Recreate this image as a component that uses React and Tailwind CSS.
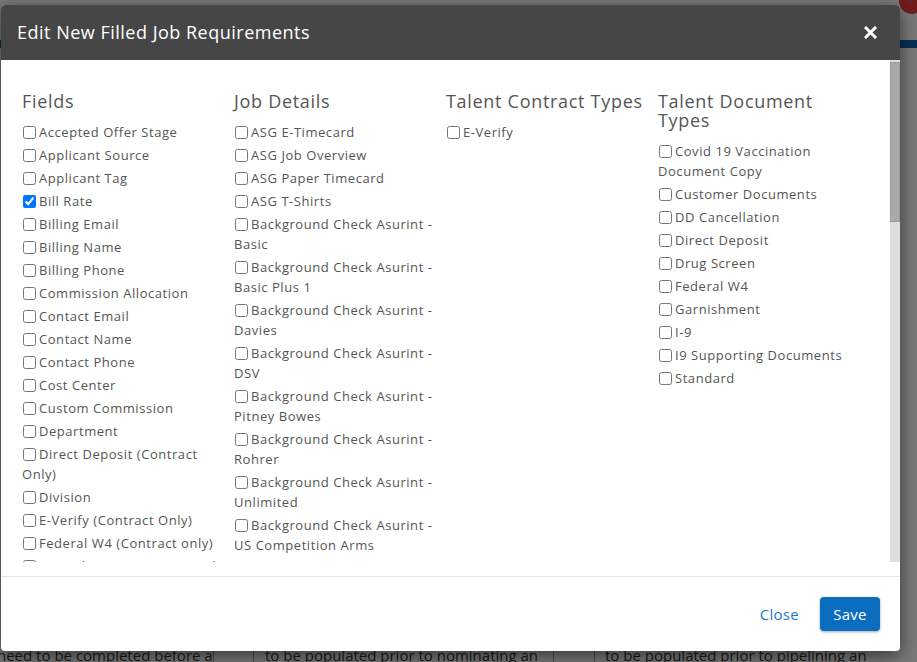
import { useState } from "react";

const fields = [
  "Accepted Offer Stage",
  "Applicant Source",
  "Applicant Tag",
  "Bill Rate",
  "Billing Email",
  "Billing Name",
  "Billing Phone",
  "Commission Allocation",
  "Contact Email",
  "Contact Name",
  "Contact Phone",
  "Cost Center",
  "Custom Commission",
  "Department",
  "Direct Deposit (Contract Only)",
  "Division",
  "E-Verify (Contract Only)",
  "Federal W4 (Contract only)",
  "Garnishment (Contract Only)",
  "Hiring Manager",
  "I-9 (Contract Only)",
  "Job Category",
];

const jobDetails = [
  "ASG E-Timecard",
  "ASG Job Overview",
  "ASG Paper Timecard",
  "ASG T-Shirts",
  "Background Check Asurint - Basic",
  "Background Check Asurint - Basic Plus 1",
  "Background Check Asurint - Davies",
  "Background Check Asurint - DSV",
  "Background Check Asurint - Pitney Bowes",
  "Background Check Asurint - Rohrer",
  "Background Check Asurint - Unlimited",
  "Background Check Asurint - US Competition Arms",
  "Drug Screen - 10 Panel",
  "Drug Screen - 5 Panel",
];

const contractTypes = ["E-Verify"];

const documentTypes = [
  "Covid 19 Vaccination Document Copy",
  "Customer Documents",
  "DD Cancellation",
  "Direct Deposit",
  "Drug Screen",
  "Federal W4",
  "Garnishment",
  "I-9",
  "I9 Supporting Documents",
  "Standard",
];

function CheckColumn({ title, items, checked, onToggle }) {
  return (
    <div className="w-[212px] shrink-0 pr-[6px]">
      <h3 className="text-[18px] leading-[19px] tracking-[0.7px] text-[#555] mb-[11px]">{title}</h3>
      {items.map((item) => (
        <label
          key={item}
          className="block text-[13px] leading-[20px] tracking-[0.55px] text-[#555] mb-[3px] cursor-pointer"
        >
          <input
            type="checkbox"
            checked={!!checked[title + item]}
            onChange={() => onToggle(title + item)}
            className="w-[13px] h-[13px] ml-[1px] mr-[3px] align-[-2px]"
          />
          {item}
        </label>
      ))}
    </div>
  );
}

export default function App() {
  const [checked, setChecked] = useState({ ["FieldsBill Rate"]: true });
  const toggle = (key) => setChecked((c) => ({ ...c, [key]: !c[key] }));

  return (
    <div
      className="relative h-[662px] overflow-hidden bg-[#f2f2f2]"
      style={{ fontFamily: "'Open Sans', 'Noto Sans', sans-serif" }}
    >
      {/* Página de fondo */}
      <div className="flex flex-col">
        <div className="h-[40px] flex justify-end">
          <div className="w-[26px] h-[26px] rounded-full bg-[#e03a3a] mt-[-12px] mr-[-8px]" />
        </div>
        <div className="h-[8px] bg-[#0b63a8]" />
        <div className="h-[598px]" />
        <div className="flex text-[15px] leading-[18px] text-[#333] whitespace-nowrap">
          <div className="w-[216px] -ml-[3px] overflow-hidden">need to be completed before a</div>
          <div className="w-[40px] border-l border-[#999]" />
          <div className="w-[300px] pl-[11px] border-l border-[#999] overflow-hidden">
            to be populated prior to nominating an
          </div>
          <div className="w-[41px] border-l border-[#999]" />
          <div className="flex-1 pl-[10px] border-l border-[#999]">to be populated prior to pipelining an</div>
        </div>
      </div>

      {/* Overlay */}
      <div className="absolute inset-0 bg-black/50" />

      {/* Modal */}
      <div className="absolute left-[1px] top-[5px] w-[899px] h-[646px] bg-white rounded-[4px] shadow-[0_5px_18px_rgba(0,0,0,0.55)] flex flex-col overflow-hidden">
        <div className="h-[55px] shrink-0 bg-[#464646] flex items-center justify-between pl-[16px] pr-[23px]">
          <h2 className="text-white text-[18px] font-medium tracking-[0.5px]">Edit New Filled Job Requirements</h2>
          <button>
            <svg width="13" height="13" viewBox="0 0 13 13">
              <path d="M2 2 L11 11 M11 2 L2 11" stroke="white" strokeWidth="3" strokeLinecap="square" />
            </svg>
          </button>
        </div>

        <div className="flex-1 flex min-h-0 mb-[14px]">
          <div className="flex-1 overflow-hidden pt-[32px] pl-[21px] flex items-start">
            <CheckColumn title="Fields" items={fields} checked={checked} onToggle={toggle} />
            <CheckColumn title="Job Details" items={jobDetails} checked={checked} onToggle={toggle} />
            <CheckColumn title="Talent Contract Types" items={contractTypes} checked={checked} onToggle={toggle} />
            <CheckColumn title="Talent Document Types" items={documentTypes} checked={checked} onToggle={toggle} />
          </div>
          {/* Barra de desplazamiento */}
          <div className="w-[10px] shrink-0 bg-[#dedede] pt-[2px]">
            <div className="h-[160px] bg-[#a9a9a9] border border-[#9b9b9b]" />
          </div>
        </div>

        <div className="h-[75px] shrink-0 border-t border-[#e5e5e5] flex items-center justify-end gap-[21px] pr-[20px]">
          <button className="text-[15px] tracking-[0.3px] text-[#1a7bc9]">Close</button>
          <button className="h-[34px] w-[60px] rounded-[4px] bg-[#0b6dbf] text-white text-[15px] font-medium tracking-[0.3px] shadow-[0_1px_3px_rgba(0,0,0,0.35)]">
            Save
          </button>
        </div>
      </div>
    </div>
  );
}
